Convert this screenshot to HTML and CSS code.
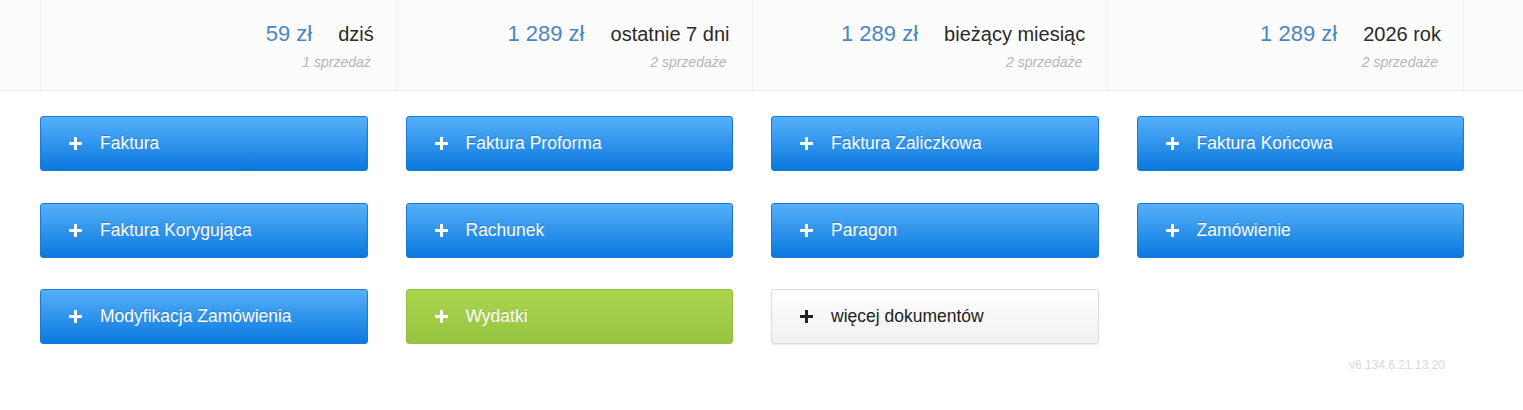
FILE: index.html
```html
<!DOCTYPE html>
<html lang="pl">
<head>
    <meta charset="UTF-8">
    <title>Pulpit</title>
    <link rel="stylesheet" href="styles.css">
</head>
<body>
    <div class="stats">
        <div class="stats-inner">
            <div class="stat">
                <div class="stat-main"><span class="amount">59 zł</span><span class="period">dziś</span></div>
                <div class="count">1 sprzedaż</div>
            </div>
            <div class="stat">
                <div class="stat-main"><span class="amount">1 289 zł</span><span class="period">ostatnie 7 dni</span></div>
                <div class="count">2 sprzedaże</div>
            </div>
            <div class="stat">
                <div class="stat-main"><span class="amount">1 289 zł</span><span class="period">bieżący miesiąc</span></div>
                <div class="count">2 sprzedaże</div>
            </div>
            <div class="stat">
                <div class="stat-main"><span class="amount">1 289 zł</span><span class="period">2026 rok</span></div>
                <div class="count">2 sprzedaże</div>
            </div>
        </div>
    </div>

    <div class="content">
        <div class="buttons">
            <a class="btn btn-blue" href="#"><i class="plus"></i>Faktura</a>
            <a class="btn btn-blue" href="#"><i class="plus"></i>Faktura Proforma</a>
            <a class="btn btn-blue" href="#"><i class="plus"></i>Faktura Zaliczkowa</a>
            <a class="btn btn-blue" href="#"><i class="plus"></i>Faktura Końcowa</a>
            <a class="btn btn-blue" href="#"><i class="plus"></i>Faktura Korygująca</a>
            <a class="btn btn-blue" href="#"><i class="plus"></i>Rachunek</a>
            <a class="btn btn-blue" href="#"><i class="plus"></i>Paragon</a>
            <a class="btn btn-blue" href="#"><i class="plus"></i>Zamówienie</a>
            <a class="btn btn-blue" href="#"><i class="plus"></i>Modyfikacja Zamówienia</a>
            <a class="btn btn-green" href="#"><i class="plus"></i>Wydatki</a>
            <a class="btn btn-grey" href="#"><i class="plus"></i>więcej dokumentów</a>
        </div>
        <div class="version">v6.134.6.21.13.20</div>
    </div>
</body>
</html>
```

FILE: styles.css
```css
* {
    margin: 0;
    padding: 0;
    box-sizing: border-box;
}

body {
    font-family: "Liberation Sans", Arial, sans-serif;
    background: #fff;
    color: #333;
}

/* statystyki */
.stats {
    background: #fcfcfc;
    border-bottom: 1px solid #ebebeb;
}
.stats-inner {
    width: 1424px;
    margin-left: 40px;
    display: grid;
    grid-template-columns: repeat(4, 1fr);
    border-left: 1px solid #efefef;
}
.stat {
    height: 90px;
    border-right: 1px solid #efefef;
    padding: 21px 22px 0 0;
    text-align: right;
}
.stat-main {
    display: flex;
    justify-content: flex-end;
    align-items: baseline;
    gap: 26px;
}
.amount {
    font-size: 22px;
    color: #4a87c2;
}
.period {
    font-size: 20px;
    color: #2a2a2a;
}
.count {
    margin-top: 7px;
    padding-right: 3px;
    font-size: 14px;
    font-style: italic;
    color: #b5b5b5;
}

/* przyciski */
.content {
    width: 1424px;
    margin-left: 40px;
    padding-top: 25px;
}
.buttons {
    display: grid;
    grid-template-columns: repeat(4, 1fr);
    column-gap: 38px;
    row-gap: 31.5px;
}
.btn {
    height: 55px;
    display: flex;
    align-items: center;
    padding-left: 28px;
    border-radius: 3px;
    font-size: 17.5px;
    text-decoration: none;
    color: #fff;
}
.btn-blue {
    background: linear-gradient(to bottom, #56b0f9, #0a78de);
    border: 1px solid #1c78d2;
    text-shadow: 0 -1px 0 rgba(0, 0, 0, 0.2);
}
.btn-green {
    background: linear-gradient(to bottom, #a9d54e, #97c43f);
    border: 1px solid #94c03f;
    text-shadow: 0 -1px 0 rgba(0, 0, 0, 0.15);
}
.btn-grey {
    background: linear-gradient(to bottom, #ffffff, #f0f0f0);
    border: 1px solid #dcdcdc;
    box-shadow: 0 1px 1px rgba(0, 0, 0, 0.08);
    color: #222;
}
.plus {
    width: 13px;
    height: 13px;
    margin-right: 18px;
    position: relative;
    flex: none;
}
.plus::before,
.plus::after {
    content: "";
    position: absolute;
    background: #fff;
}
.plus::before {
    left: 0;
    top: 5px;
    width: 13px;
    height: 3px;
}
.plus::after {
    left: 5px;
    top: 0;
    width: 3px;
    height: 13px;
}
.btn-grey .plus::before,
.btn-grey .plus::after {
    background: #222;
}

.version {
    text-align: right;
    padding: 14px 19px 0 0;
    font-size: 12px;
    color: #d9d9d9;
}
```
